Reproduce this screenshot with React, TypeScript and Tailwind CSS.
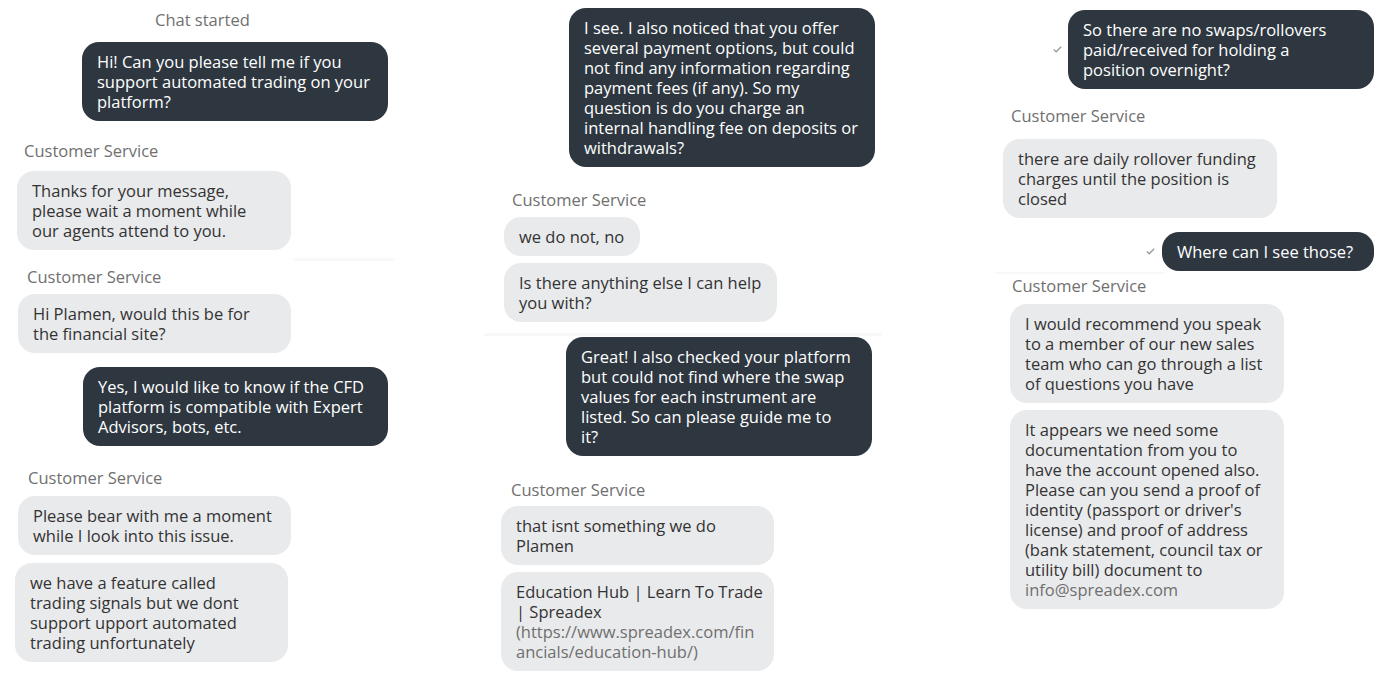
import React from "react";

const FONT = { fontFamily: '"Open Sans", "Noto Sans", "Liberation Sans", sans-serif' };

function Lines({ lines }: { lines: React.ReactNode[] }) {
  return (
    <>
      {lines.map((l, i) => (
        <div key={i} className="whitespace-nowrap">
          {l}
        </div>
      ))}
    </>
  );
}

function Dark({ lines, className }: { lines: React.ReactNode[]; className: string }) {
  return (
    <div className={"rounded-[17px] bg-[#2e3740] text-white px-[15px] pt-[10px] pb-[9px] " + className}>
      <Lines lines={lines} />
    </div>
  );
}

function Gray({ lines, className }: { lines: React.ReactNode[]; className: string }) {
  return (
    <div className={"rounded-[17px] bg-[#e9eaec] text-[#333333] px-[15px] pt-[10px] pb-[9px] " + className}>
      <Lines lines={lines} />
    </div>
  );
}

function Label({ className }: { className: string }) {
  return <div className={"text-[#707070] leading-[20px] " + className}>Customer Service</div>;
}

function Check() {
  return (
    <svg width="9" height="7" viewBox="0 0 9 7" className="shrink-0">
      <polyline points="0.8,3.6 3.2,5.8 8.2,0.8" fill="none" stroke="#9a9a9a" strokeWidth="1.3" />
    </svg>
  );
}

export default function App() {
  return (
    <div
      className="w-[1385px] h-[683px] bg-white overflow-hidden flex flex-row text-[16.5px] leading-[20px]"
      style={FONT}
    >
      {/* Column 1 */}
      <div className="w-[395px] shrink-0 flex flex-col items-start">
        <div className="mt-[10px] ml-[155px] text-[#707070]">Chat started</div>
        <Dark
          className="mt-[12px] ml-[82px] w-[306px]"
          lines={["Hi! Can you please tell me if you", "support automated trading on your", "platform?"]}
        />
        <Label className="mt-[20px] ml-[24px]" />
        <Gray
          className="mt-[10px] ml-[17px] w-[274px]"
          lines={["Thanks for your message,", "please wait a moment while", "our agents attend to you."]}
        />
        <div className="mt-[8px] ml-[293px] w-[102px] h-[3px] bg-[#f8f8f8]" />
        <Label className="mt-[6px] ml-[27px]" />
        <Gray
          className="mt-[7px] ml-[18px] w-[273px]"
          lines={["Hi Plamen, would this be for", "the financial site?"]}
        />
        <Dark
          className="mt-[14px] ml-[83px] w-[305px]"
          lines={["Yes, I would like to know if the CFD", "platform is compatible with Expert", "Advisors, bots, etc."]}
        />
        <Label className="mt-[22px] ml-[28px]" />
        <Gray
          className="mt-[8px] ml-[18px] w-[273px]"
          lines={["Please bear with me a moment", "while I look into this issue."]}
        />
        <Gray
          className="mt-[8px] ml-[15px] w-[273px]"
          lines={[
            "we have a feature called",
            "trading signals but we dont",
            "support upport automated",
            "trading unfortunately",
          ]}
        />
      </div>

      {/* Column 2 */}
      <div className="ml-[89px] w-[398px] shrink-0 flex flex-col items-start">
        <Dark
          className="mt-[8px] ml-[85px] w-[306px]"
          lines={[
            "I see. I also noticed that you offer",
            "several payment options, but could",
            "not find any information regarding",
            "payment fees (if any). So my",
            "question is do you charge an",
            "internal handling fee on deposits or",
            "withdrawals?",
          ]}
        />
        <Label className="mt-[23px] ml-[28px]" />
        <Gray className="mt-[7px] ml-[20px] w-[136px]" lines={["we do not, no"]} />
        <Gray
          className="mt-[7px] ml-[20px] w-[273px]"
          lines={["Is there anything else I can help", "you with?"]}
        />
        <div className="mt-[11px] w-[398px] h-[3px] bg-[#f8f8f8]" />
        <Dark
          className="mt-[1px] ml-[82px] w-[306px]"
          lines={[
            "Great! I also checked your platform",
            "but could not find where the swap",
            "values for each instrument are",
            "listed. So can please guide me to",
            "it?",
          ]}
        />
        <Label className="mt-[24px] ml-[27px]" />
        <Gray
          className="mt-[6px] ml-[17px] w-[273px]"
          lines={["that isnt something we do", "Plamen"]}
        />
        <Gray
          className="mt-[7px] ml-[17px] w-[273px]"
          lines={[
            "Education Hub | Learn To Trade",
            "| Spreadex",
            <span className="text-[#6f6f6f]">(https://www.spreadex.com/fin</span>,
            <span className="text-[#6f6f6f]">ancials/education-hub/)</span>,
          ]}
        />
      </div>

      {/* Column 3 */}
      <div className="ml-[113px] w-[390px] shrink-0 flex flex-col items-start">
        <div className="mt-[10px] self-end mr-[11px] flex flex-row items-center gap-[6px]">
          <Check />
          <Dark
            className="w-[306px]"
            lines={["So there are no swaps/rollovers", "paid/received for holding a", "position overnight?"]}
          />
        </div>
        <Label className="mt-[17px] ml-[16px]" />
        <Gray
          className="mt-[13px] ml-[8px] w-[274px]"
          lines={["there are daily rollover funding", "charges until the position is", "closed"]}
        />
        <div className="mt-[14px] self-end mr-[11px] flex flex-row items-center gap-[7px]">
          <Check />
          <Dark className="w-[212px]" lines={["Where can I see those?"]} />
        </div>
        <div className="mt-[1px] w-[170px] h-[2px] bg-[#f8f8f8]" />
        <Label className="mt-[2px] ml-[17px]" />
        <Gray
          className="mt-[8px] ml-[15px] w-[274px]"
          lines={[
            "I would recommend you speak",
            "to a member of our new sales",
            "team who can go through a list",
            "of questions you have",
          ]}
        />
        <Gray
          className="mt-[7px] ml-[15px] w-[274px]"
          lines={[
            "It appears we need some",
            "documentation from you to",
            "have the account opened also.",
            "Please can you send a proof of",
            "identity (passport or driver's",
            "license) and proof of address",
            "(bank statement, council tax or",
            "utility bill) document to",
            <span className="text-[#6f6f6f]">info@spreadex.com</span>,
          ]}
        />
      </div>
    </div>
  );
}
